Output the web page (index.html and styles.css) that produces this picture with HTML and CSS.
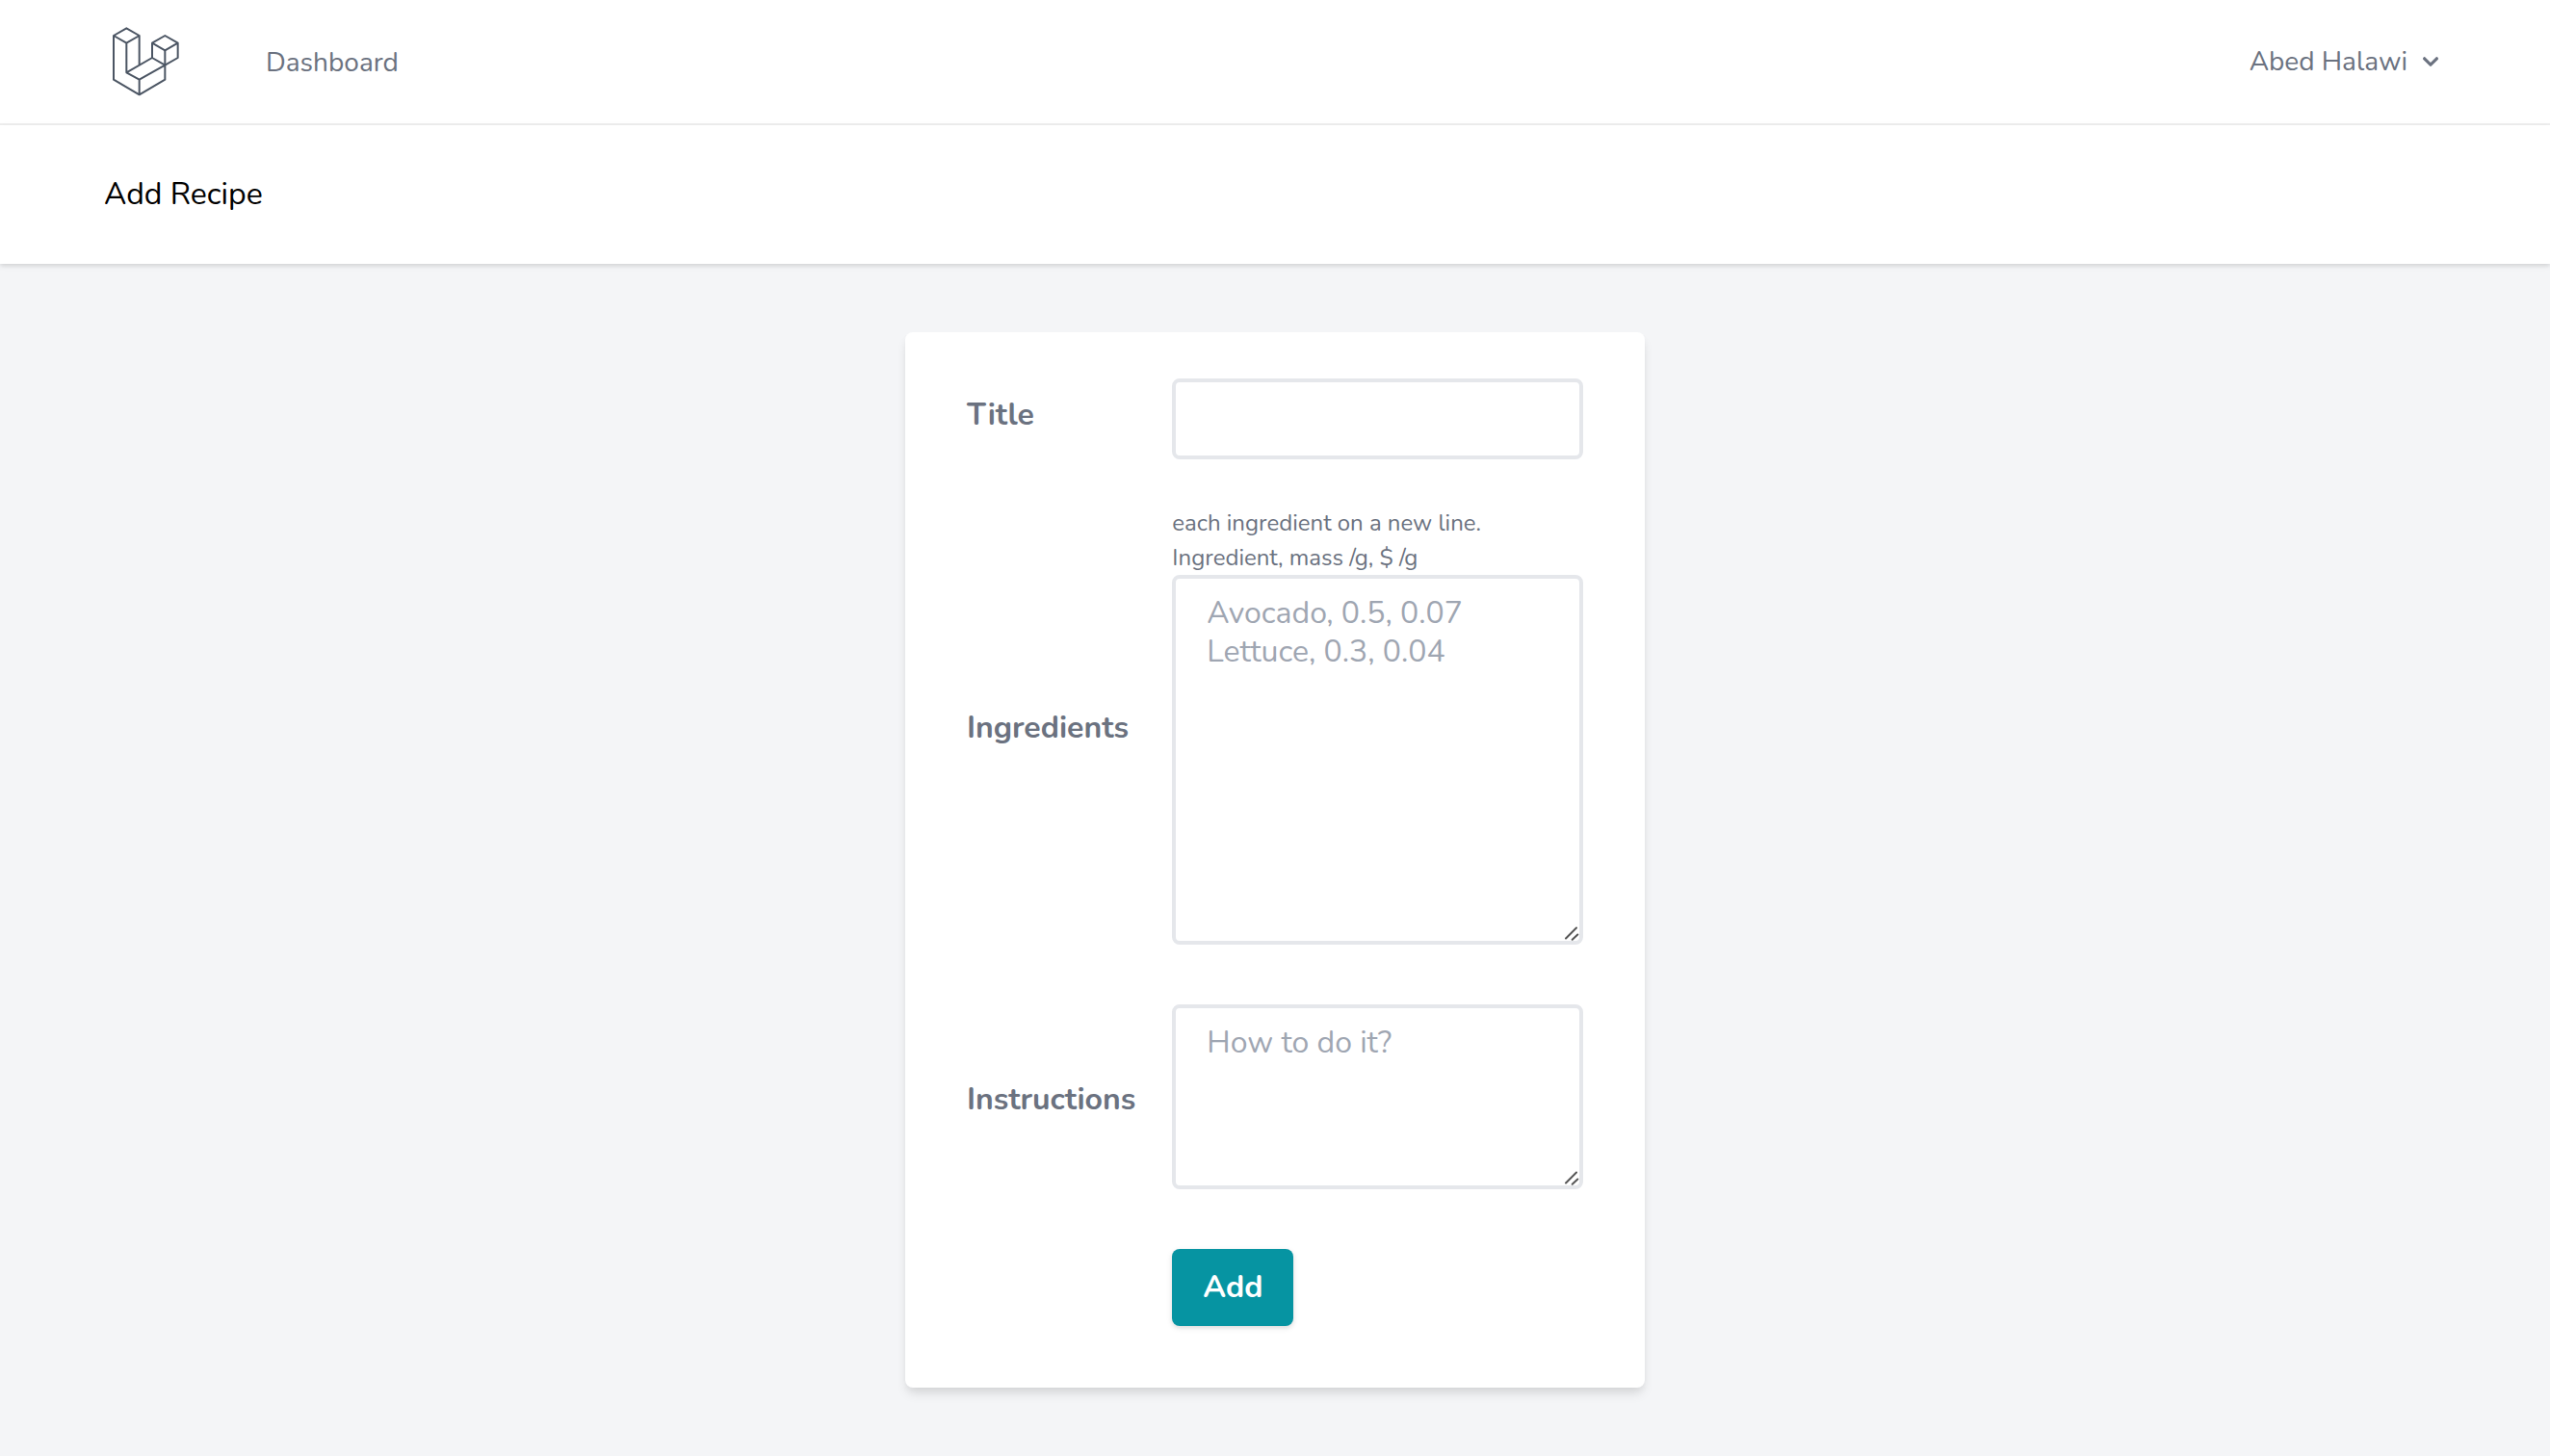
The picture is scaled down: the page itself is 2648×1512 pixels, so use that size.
FILE: index.html
```html
<!DOCTYPE html>
<html lang="en">
<head>
  <meta charset="utf-8">
  <meta name="viewport" content="width=device-width, initial-scale=1">
  <title>Add Recipe</title>
  <link rel="stylesheet" href="styles.css">
</head>
<body>
  <nav class="nav">
    <div class="container nav-inner">
      <a class="logo" href="#" aria-label="Home">
        <svg width="80" height="74" viewBox="54 51 240 222" fill="none" stroke="#4b5563" stroke-width="6" stroke-linejoin="round" stroke-linecap="round">
          <path d="M124 58l40 23-40 23-40-23zM84 81v137l80 47 80-47v-91M124 104v92l40 22v47M164 218l80-45M124 196l80-46M164 81v92"/>
          <path d="M244 81l40 23-40 23-40-23zM204 104v46l40 23 40-23v-46"/>
        </svg>
      </a>
      <a class="nav-link" href="#">Dashboard</a>
      <button class="user-menu" type="button">
        Abed Halawi
        <svg width="32" height="32" viewBox="0 0 20 20" fill="currentColor" aria-hidden="true">
          <path d="M5.293 7.293a1 1 0 011.414 0L10 10.586l3.293-3.293a1 1 0 111.414 1.414l-4 4a1 1 0 01-1.414 0l-4-4a1 1 0 010-1.414z"/>
        </svg>
      </button>
    </div>
  </nav>
  <header class="page-header">
    <div class="container">
      <h1 class="page-title">Add Recipe</h1>
    </div>
  </header>
  <main class="main">
    <form class="card">
      <label class="label" for="title">Title</label>
      <div class="field">
        <input class="control" id="title" type="text">
      </div>

      <label class="label" for="ingredients">Ingredients</label>
      <div class="field field-area">
        <p class="hint">each ingredient on a new line.<br>Ingredient, mass /g, $ /g</p>
        <textarea class="control" id="ingredients" rows="8" placeholder="Avocado, 0.5, 0.07&#10;Lettuce, 0.3, 0.04"></textarea>
      </div>

      <label class="label" for="instructions">Instructions</label>
      <div class="field field-area">
        <textarea class="control control-short" id="instructions" rows="4" placeholder="How to do it?"></textarea>
      </div>

      <div class="actions">
        <button class="button" type="submit">Add</button>
      </div>
    </form>
  </main>
</body>
</html>
```
FILE: styles.css
```css
*,
*::before,
*::after {
  box-sizing: border-box;
}

body {
  margin: 0;
  min-height: 100vh;
  display: flex;
  flex-direction: column;
  background: #f4f5f7;
  color: #6b7280;
  font-family: Nunito, Lato, sans-serif;
  font-size: 32px;
  line-height: 48px;
}

.container {
  width: 100%;
  max-width: 2560px;
  margin: 0 auto;
  padding: 0 64px;
}

/* Navigation */
.nav {
  background: #fff;
  border-bottom: 2px solid #f0f0f0;
}

.nav-inner {
  display: flex;
  align-items: center;
  min-height: 128px;
}

.logo {
  display: flex;
}

.nav-link {
  margin-left: 88px;
  padding-top: 2px;
  color: inherit;
  font-size: 28px;
  text-decoration: none;
}

.user-menu {
  display: flex;
  align-items: center;
  gap: 8px;
  margin-left: auto;
  padding: 0;
  border: 0;
  background: none;
  color: inherit;
  font: inherit;
  font-size: 28px;
}

/* Page header */
.page-header {
  position: relative;
  padding: 48px 0;
  background: #fff;
  box-shadow: 0 2px 6px rgba(0, 0, 0, 0.1), 0 2px 4px rgba(0, 0, 0, 0.06);
}

.page-title {
  margin: 0;
  color: #000;
  font-size: 32px;
  font-weight: 400;
}

/* Form */
.main {
  flex: 1;
  display: flex;
  align-items: center;
  justify-content: center;
}

.card {
  width: 100%;
  max-width: 768px;
  display: grid;
  grid-template-columns: 1fr 2fr;
  row-gap: 48px;
  align-items: center;
  padding: 48px 64px 64px;
  border-radius: 8px;
  background: #fff;
  box-shadow: 0 8px 12px -2px rgba(0, 0, 0, 0.1), 0 4px 8px -2px rgba(0, 0, 0, 0.06);
}

.label {
  padding-bottom: 8px;
  font-weight: 700;
}

.field {
  min-width: 0;
}

.field-area {
  padding-bottom: 14px;
}

.hint {
  margin: 0;
  font-size: 24px;
  line-height: 36px;
}

.control {
  display: block;
  width: 100%;
  height: 84px;
  padding: 16px 32px;
  border: 4px solid #e5e7eb;
  border-radius: 8px;
  background: #fff;
  color: #374151;
  font: inherit;
  line-height: 40px;
}

textarea.control {
  height: 384px;
  resize: vertical;
}

textarea.control-short {
  height: 192px;
}

.control::placeholder {
  color: #9fa6b2;
  opacity: 1;
}

.control::-webkit-resizer {
  background: url("data:image/svg+xml,%3Csvg xmlns='http://www.w3.org/2000/svg' viewBox='0 0 15 15' fill='none' stroke='%23555' stroke-width='2' stroke-linecap='round'%3E%3Cpath d='M1 12.5L12 1.5M7.7 13.7L13.3 8.5'/%3E%3C/svg%3E") no-repeat right bottom / 15px 15px;
}

.actions {
  grid-column: 2;
}

.button {
  display: block;
  padding: 16px 32px;
  border: 0;
  border-radius: 8px;
  background: #0694a2;
  box-shadow: 0 2px 6px rgba(0, 0, 0, 0.1), 0 2px 4px rgba(0, 0, 0, 0.06);
  color: #fff;
  font: inherit;
  font-weight: 700;
  line-height: 48px;
}
```
